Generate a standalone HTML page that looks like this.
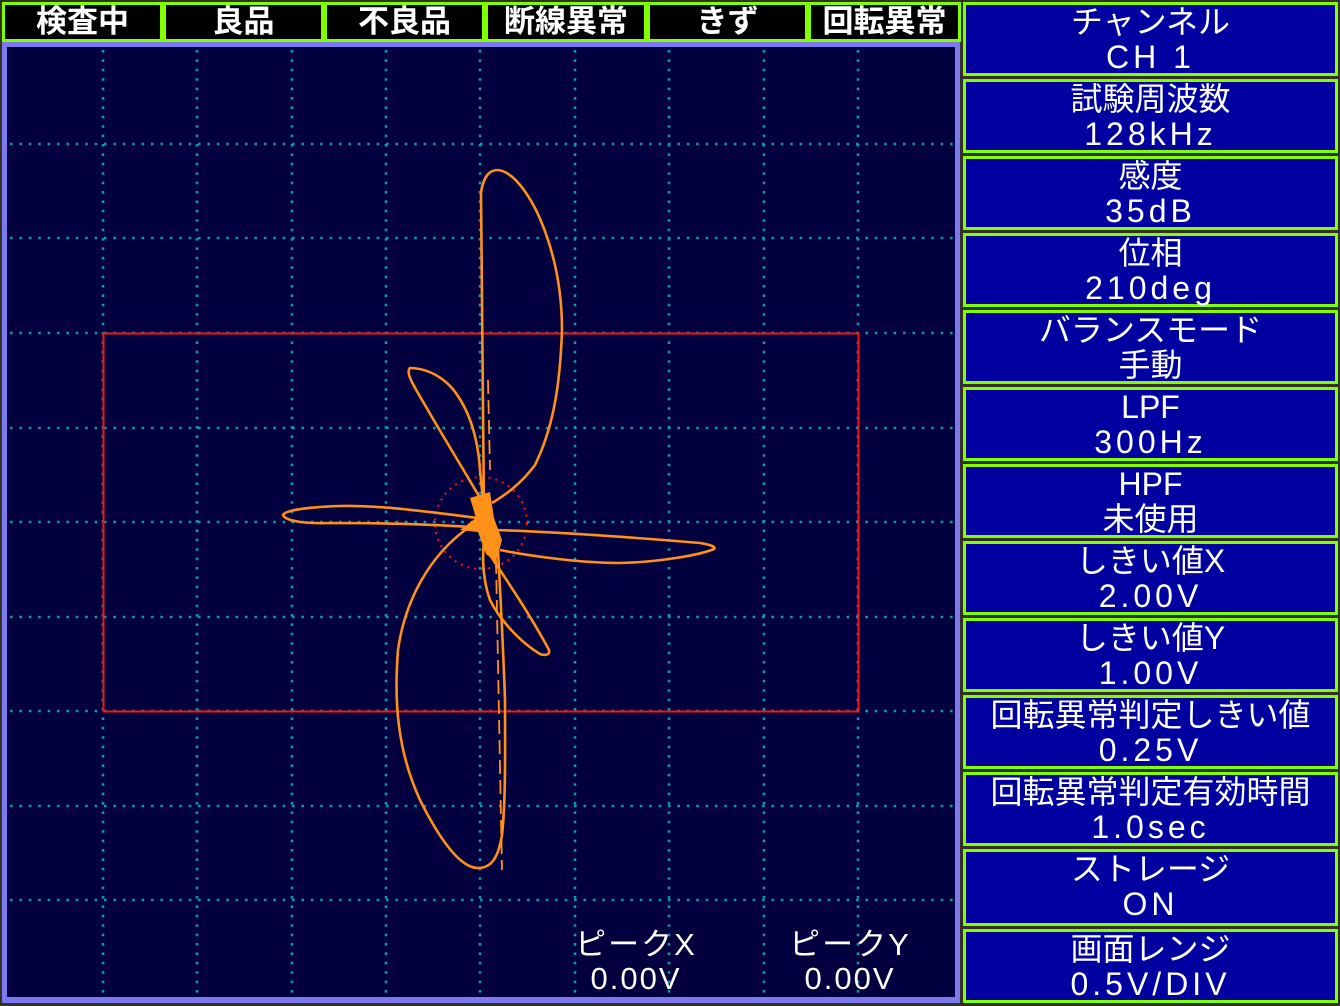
<!DOCTYPE html>
<html><head><meta charset="utf-8"><style>
*{margin:0;padding:0;box-sizing:border-box}
body{width:1340px;height:1006px;background:#333028;position:relative;overflow:hidden;font-family:"Liberation Sans","Noto Sans CJK JP",sans-serif;color:#fff}
.top{position:absolute;top:2px;height:40px;background:#000;border:3px solid #80ff00;font-size:31px;line-height:33px;text-align:center;font-weight:bold;white-space:nowrap;overflow:hidden}
.plot{position:absolute;left:2px;top:42px;width:958px;height:961px;background:#7c78f0;}
.plot svg{position:absolute;left:0;top:0}
.box{position:absolute;left:963px;width:375px;background:#0000a0;border:3px solid #80ff00;text-align:center;font-size:32px;line-height:35px;white-space:nowrap}
.box .v{letter-spacing:4px}
.pk{position:absolute;font-size:31px;line-height:34px;text-align:center;white-space:nowrap;letter-spacing:2px}
</style></head><body>
<div class="top" style="left:2px;width:161px">検査中</div>
<div class="top" style="left:163px;width:161px">良品</div>
<div class="top" style="left:324px;width:161px">不良品</div>
<div class="top" style="left:485px;width:162px">断線異常</div>
<div class="top" style="left:647px;width:161px">きず</div>
<div class="top" style="left:808px;width:153px">回転異常</div>

<div class="plot">
<svg width="958" height="961" viewBox="2 42 958 961">
<rect x="7" y="47" width="948" height="950" fill="#02003f"/>
<g stroke="#0a9aa8" stroke-width="2.6" stroke-dasharray="2.6 6.8">
<line x1="103" y1="50" x2="103" y2="995"/><line x1="197" y1="50" x2="197" y2="995"/><line x1="292" y1="50" x2="292" y2="995"/><line x1="386" y1="50" x2="386" y2="995"/><line x1="480" y1="50" x2="480" y2="995"/><line x1="575" y1="50" x2="575" y2="995"/><line x1="669" y1="50" x2="669" y2="995"/><line x1="764" y1="50" x2="764" y2="995"/><line x1="858" y1="50" x2="858" y2="995"/>
<line x1="10" y1="144" x2="955" y2="144"/><line x1="10" y1="238" x2="955" y2="238"/><line x1="10" y1="333" x2="955" y2="333"/><line x1="10" y1="428" x2="955" y2="428"/><line x1="10" y1="522" x2="955" y2="522"/><line x1="10" y1="617" x2="955" y2="617"/><line x1="10" y1="711" x2="955" y2="711"/><line x1="10" y1="806" x2="955" y2="806"/><line x1="10" y1="900" x2="955" y2="900"/>
</g>
<rect x="103.5" y="333.5" width="755" height="378" fill="none" stroke="#ff1010" stroke-width="2"/>
<circle cx="481" cy="523" r="46" fill="none" stroke="#ff1010" stroke-width="2" stroke-dasharray="2 5"/>
<g fill="none" stroke="#ff9018" stroke-width="2.6" stroke-linejoin="round">
<path d="M484,515 L481,192 C484,175 490,170 498,170 C515,172 535,200 548,240 C558,270 562,300 562,330 C560,390 552,430 535,465 C520,485 505,495 492,503"/>
<path d="M484,505 C470,480 445,440 425,405 C410,380 406,372 410,368 C425,368 440,375 452,388 C470,410 478,440 480,470 L483,500"/>
<path d="M478,518 C430,512 380,505 340,506 C310,507 285,510 283,515 C285,520 300,524 330,523 C390,523 440,525 470,527"/>
<path d="M495,530 C560,532 640,538 700,543 C712,545 716,547 714,549 C700,555 660,562 620,563 C580,563 530,556 500,550"/>
<path d="M490,555 C510,585 530,615 548,648 C552,655 545,656 540,654 C520,642 500,620 490,600 C483,580 482,560 484,540"/>
<path d="M468,528 C430,555 405,600 398,650 C394,700 397,750 420,800 C440,840 460,868 478,868 C490,868 498,860 502,835 C506,800 505,740 505,700 C503,640 500,590 498,550"/>
<path d="M488,380 L490,470 M496,560 L502,870" stroke-dasharray="14 6" stroke-width="1.8"/>
</g>
<path d="M470,498 L490,492 L494,518 L502,540 L496,562 L486,554 L478,532 L460,530 L476,518 Z" fill="#ff9018"/>
</svg>
</div>
<div class="pk" style="left:568px;top:928px;width:136px">ピークX<br>0.00V</div>
<div class="pk" style="left:782px;top:928px;width:136px">ピークY<br>0.00V</div>

<div class="box" style="top:2px;height:74px">チャンネル<br><span class="v">CH 1</span></div>
<div class="box" style="top:79px;height:74px">試験周波数<br><span class="v">128kHz</span></div>
<div class="box" style="top:156px;height:74px">感度<br><span class="v">35dB</span></div>
<div class="box" style="top:233px;height:74px">位相<br><span class="v">210deg</span></div>
<div class="box" style="top:310px;height:74px">バランスモード<br>手動</div>
<div class="box" style="top:387px;height:74px">LPF<br><span class="v">300Hz</span></div>
<div class="box" style="top:464px;height:74px">HPF<br>未使用</div>
<div class="box" style="top:541px;height:74px">しきい値X<br><span class="v">2.00V</span></div>
<div class="box" style="top:618px;height:74px">しきい値Y<br><span class="v">1.00V</span></div>
<div class="box" style="top:695px;height:74px">回転異常判定しきい値<br><span class="v">0.25V</span></div>
<div class="box" style="top:772px;height:74px">回転異常判定有効時間<br><span class="v">1.0sec</span></div>
<div class="box" style="top:849px;height:77px">ストレージ<br><span class="v">ON</span></div>
<div class="box" style="top:929px;height:74px">画面レンジ<br><span class="v">0.5V/DIV</span></div>
</body></html>
